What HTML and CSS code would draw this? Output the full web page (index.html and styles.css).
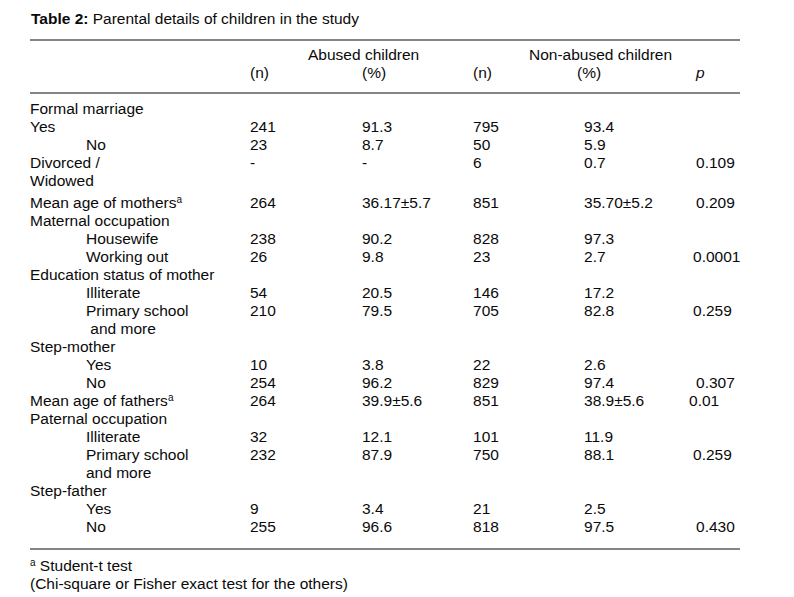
FILE: index.html
```html
<!DOCTYPE html>
<html lang="en">
<head>
<meta charset="utf-8">
<title>Table 2: Parental details of children in the study</title>
<link rel="stylesheet" href="styles.css">
</head>
<body>
<div class="page">
  <p class="title"><b>Table 2:</b> Parental details of children in the study</p>
  <table class="data">
    <colgroup>
      <col class="c-label">
      <col class="c-n1">
      <col class="c-p1">
      <col class="c-n2">
      <col class="c-p2">
      <col class="c-p">
    </colgroup>
    <thead>
      <tr class="h1">
        <th></th>
        <th colspan="2" class="grp1">Abused children</th>
        <th colspan="2" class="grp2">Non-abused children</th>
        <th></th>
      </tr>
      <tr class="h2">
        <th></th>
        <th>(n)</th>
        <th>(%)</th>
        <th>(n)</th>
        <th class="pct2h">(%)</th>
        <th class="pv"><i>p</i></th>
      </tr>
    </thead>
    <tbody>
      <tr><td>Formal marriage</td><td></td><td></td><td></td><td></td><td></td></tr>
      <tr><td>Yes</td><td>241</td><td>91.3</td><td>795</td><td>93.4</td><td></td></tr>
      <tr><td class="in">No</td><td>23</td><td>8.7</td><td>50</td><td>5.9</td><td></td></tr>
      <tr><td>Divorced /<br>Widowed</td><td>-</td><td>-</td><td>6</td><td>0.7</td><td class="pv">0.109</td></tr>
      <tr class="gap"><td>Mean age of mothers<sup>a</sup></td><td>264</td><td>36.17±5.7</td><td>851</td><td>35.70±5.2</td><td class="pv">0.209</td></tr>
      <tr><td>Maternal occupation</td><td></td><td></td><td></td><td></td><td></td></tr>
      <tr><td class="in">Housewife</td><td>238</td><td>90.2</td><td>828</td><td>97.3</td><td></td></tr>
      <tr><td class="in">Working out</td><td>26</td><td>9.8</td><td>23</td><td>2.7</td><td class="pv pv-b">0.0001</td></tr>
      <tr><td>Education status of mother</td><td></td><td></td><td></td><td></td><td></td></tr>
      <tr><td class="in">Illiterate</td><td>54</td><td>20.5</td><td>146</td><td>17.2</td><td></td></tr>
      <tr><td class="in">Primary school<br>&nbsp;and more</td><td>210</td><td>79.5</td><td>705</td><td>82.8</td><td class="pv pv-b">0.259</td></tr>
      <tr><td>Step-mother</td><td></td><td></td><td></td><td></td><td></td></tr>
      <tr><td class="in">Yes</td><td>10</td><td>3.8</td><td>22</td><td>2.6</td><td></td></tr>
      <tr><td class="in">No</td><td>254</td><td>96.2</td><td>829</td><td>97.4</td><td class="pv">0.307</td></tr>
      <tr><td>Mean age of fathers<sup>a</sup></td><td>264</td><td>39.9±5.6</td><td>851</td><td>38.9±5.6</td><td class="pv pv-c">0.01</td></tr>
      <tr><td>Paternal occupation</td><td></td><td></td><td></td><td></td><td></td></tr>
      <tr><td class="in">Illiterate</td><td>32</td><td>12.1</td><td>101</td><td>11.9</td><td></td></tr>
      <tr><td class="in">Primary school<br>and more</td><td>232</td><td>87.9</td><td>750</td><td>88.1</td><td class="pv pv-b">0.259</td></tr>
      <tr><td>Step-father</td><td></td><td></td><td></td><td></td><td></td></tr>
      <tr><td class="in">Yes</td><td>9</td><td>3.4</td><td>21</td><td>2.5</td><td></td></tr>
      <tr><td class="in">No</td><td>255</td><td>96.6</td><td>818</td><td>97.5</td><td class="pv">0.430</td></tr>
    </tbody>
  </table>
  <div class="notes">
    <p><sup>a</sup> Student-t test</p>
    <p>(Chi-square or Fisher exact test for the others)</p>
  </div>
</div>
</body>
</html>
```
FILE: styles.css
```css
html, body {
  margin: 0;
  padding: 0;
  background: #ffffff;
}

body {
  font-family: "Liberation Sans", Arial, sans-serif;
  font-size: 15.5px;
  line-height: 18px;
  color: #0a0a0a;
}

.page {
  padding: 10px 0 0 30px;
}

.title {
  margin: 0 0 11px 1px;
}

.title b {
  font-weight: bold;
}

.data {
  border-collapse: separate;
  border-spacing: 0;
  table-layout: fixed;
  width: 710px;
  border-top: 2px solid #858585;
  border-bottom: 2px solid #858585;
}

.c-label { width: 220px; }
.c-n1 { width: 112px; }
.c-p1 { width: 111px; }
.c-n2 { width: 111px; }
.c-p2 { width: 105px; }
.c-p { width: 51px; }

.data th,
.data td {
  padding: 0;
  text-align: left;
  vertical-align: top;
  font-weight: normal;
  white-space: nowrap;
}

.data .h1 th {
  padding-top: 5px;
}

.data .h2 th {
  padding-bottom: 10px;
  border-bottom: 2px solid #858585;
}

.data .grp1 {
  padding-left: 58px;
}

.data .grp2 {
  padding-left: 56px;
}

.data .pct2h {
  text-indent: -7px;
}

.data .pv {
  padding-left: 7px;
}

.data .pv-b {
  padding-left: 4px;
}

.data .pv-c {
  padding-left: 0;
}

.data tbody tr:first-child td {
  padding-top: 6px;
}

.data tbody tr:last-child td {
  padding-bottom: 12px;
}

.data tbody tr.gap td {
  padding-top: 4px;
}

.data td.in {
  padding-left: 56px;
}

sup {
  font-size: 10px;
  line-height: 0;
  vertical-align: 5px;
}

.notes {
  margin-top: 7px;
}

.notes p {
  margin: 0;
}
```
